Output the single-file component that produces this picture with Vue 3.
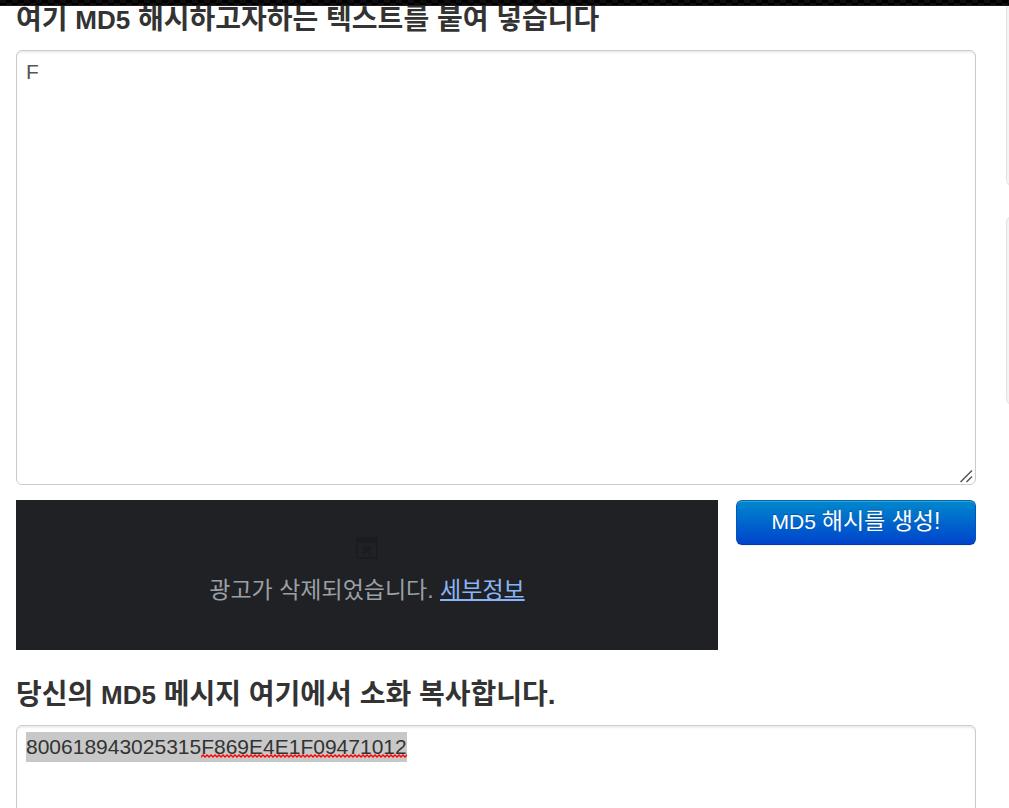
<script setup>
import { ref } from 'vue'

const source = ref('F')
const digest = ref('800618943025315F869E4E1F09471012')
</script>

<template>
  <div class="page">
    <div class="topbar"></div>
    <main class="content">
      <label class="title" for="source">여기 <span class="latin">MD5</span> 해시하고자하는 텍스트를 붙여 넣습니다</label>
      <div class="field">
        <textarea id="source" v-model="source" class="box" spellcheck="false"></textarea>
        <svg class="grip" viewBox="0 0 14 14" aria-hidden="true">
          <path d="M1.5 13L13 1.5M7.5 13L13 7.5" />
        </svg>
      </div>
      <div class="actions">
        <section class="ad">
          <svg class="ad-icon" viewBox="0 0 22 22" aria-hidden="true">
            <rect class="frame" width="22" height="22" rx="2" />
            <rect class="pane" x="2" y="6" width="18" height="14" />
            <path class="cross" d="M7.500 9.500l7 7M14.500 9.500l-7 7" />
          </svg>
          <p class="ad-text">광고가 삭제되었습니다. <a href="#">세부정보</a></p>
        </section>
        <button class="generate" type="button">MD5 <span>해시를 생성!</span></button>
      </div>
      <label class="title" for="digest">당신의 <span class="latin">MD5</span> 메시지 여기에서 소화 복사합니다.</label>
      <div class="field">
        <div class="selection" aria-hidden="true"></div>
        <textarea id="digest" v-model="digest" class="box result" spellcheck="false"></textarea>
        <svg class="squiggle" aria-hidden="true">
          <defs>
            <pattern id="wave" width="4" height="4" patternUnits="userSpaceOnUse">
              <path d="M-1 2L0 3L2 1L4 3L5 2" />
            </pattern>
          </defs>
          <rect width="100%" height="4" fill="url(#wave)" />
        </svg>
      </div>
    </main>
    <aside class="sidebar">
      <div class="well first"></div>
      <div class="well"></div>
    </aside>
  </div>
</template>

<style>
body {
  margin: 0;
  background: #fff;
}
</style>

<style scoped>
.page {
  position: relative;
  display: flex;
  gap: 30px;
  height: 100vh;
  padding-left: 16px;
  box-sizing: border-box;
  overflow: hidden;
  color: #333;
  font-family: "Liberation Sans", "Noto Sans CJK KR", sans-serif;
  font-size: 21px;
  line-height: 30px;
}
.topbar {
  position: absolute;
  inset: 0 0 auto;
  z-index: 2;
  height: 6px;
  box-sizing: border-box;
  border-bottom: 1px solid #221a1e;
  background: repeating-conic-gradient(#000 0 25%, #0e0e0e 0 50%) 0 0 / 12px 6px;
}
.content {
  flex: 1;
  min-width: 0;
}
.title {
  display: block;
  height: 30px;
  padding: 5px 0 15px;
  font-size: 28px;
  font-weight: bold;
  line-height: 30px;
  white-space: nowrap;
}
.latin {
  font-size: 26px;
}
.field {
  position: relative;
  display: flex;
}
.box {
  flex: 1;
  height: 435px;
  box-sizing: border-box;
  padding: 6px 9px;
  border: 1px solid #ccc;
  border-radius: 6px;
  outline: none;
  resize: none;
  color: #555;
  background: transparent;
  box-shadow: inset 0 2px 2px rgba(0, 0, 0, 0.075);
  font: inherit;
}
.result {
  position: relative;
  color: #333;
}
.grip {
  position: absolute;
  right: 3px;
  bottom: 2px;
  width: 14px;
  height: 14px;
  fill: none;
  stroke: #555;
  stroke-width: 1.5;
}
.selection {
  position: absolute;
  left: 10px;
  top: 7px;
  width: 381px;
  height: 30px;
  background: #c8c8c8;
}
.squiggle {
  position: absolute;
  left: 185px;
  top: 29px;
  width: 206px;
  height: 4px;
}
.squiggle path {
  fill: none;
  stroke: #f00;
  stroke-width: 1.3;
}
.actions {
  display: flex;
  align-items: flex-start;
  gap: 18px;
  margin: 15px 0 25px;
}
.ad {
  display: flex;
  flex: 1;
  flex-direction: column;
  align-items: center;
  height: 150px;
  box-sizing: border-box;
  padding-top: 37px;
  background: #202124;
}
.ad-icon {
  width: 22px;
  height: 22px;
}
.frame {
  fill: #1b1c1f;
}
.pane {
  fill: #202124;
}
.cross {
  stroke: #1b1c1f;
  stroke-width: 2;
}
.ad-text {
  margin: 16px 0 0;
  color: #9aa0a6;
  font-size: 23px;
  line-height: 30px;
  white-space: nowrap;
}
.ad-text a {
  color: #8ab4f8;
  text-decoration-thickness: 2px;
}
.generate {
  width: 240px;
  height: 45px;
  padding: 0 0 2px;
  border: 1px solid;
  border-color: #0067b0 #0055c0 #0038b0;
  border-radius: 6px;
  color: #fff;
  background: linear-gradient(#08c, #04c);
  box-shadow: inset 0 1px 0 rgba(255, 255, 255, 0.2), 0 1px 2px rgba(0, 0, 0, 0.05);
  font: inherit;
  text-shadow: 0 -1px 0 rgba(0, 0, 0, 0.25);
}
.generate span {
  font-size: 23px;
}
.sidebar {
  flex: 0 0 3px;
  overflow: hidden;
}
.well {
  width: 300px;
  height: 189px;
  box-sizing: border-box;
  margin-bottom: 30px;
  border: 1px solid #e3e3e3;
  border-radius: 6px;
  background: #f5f5f5;
  box-shadow: inset 0 1px 1px rgba(0, 0, 0, 0.05);
}
.first {
  height: 186px;
  border-top: 0;
  border-radius: 0 0 6px 6px;
}
</style>
